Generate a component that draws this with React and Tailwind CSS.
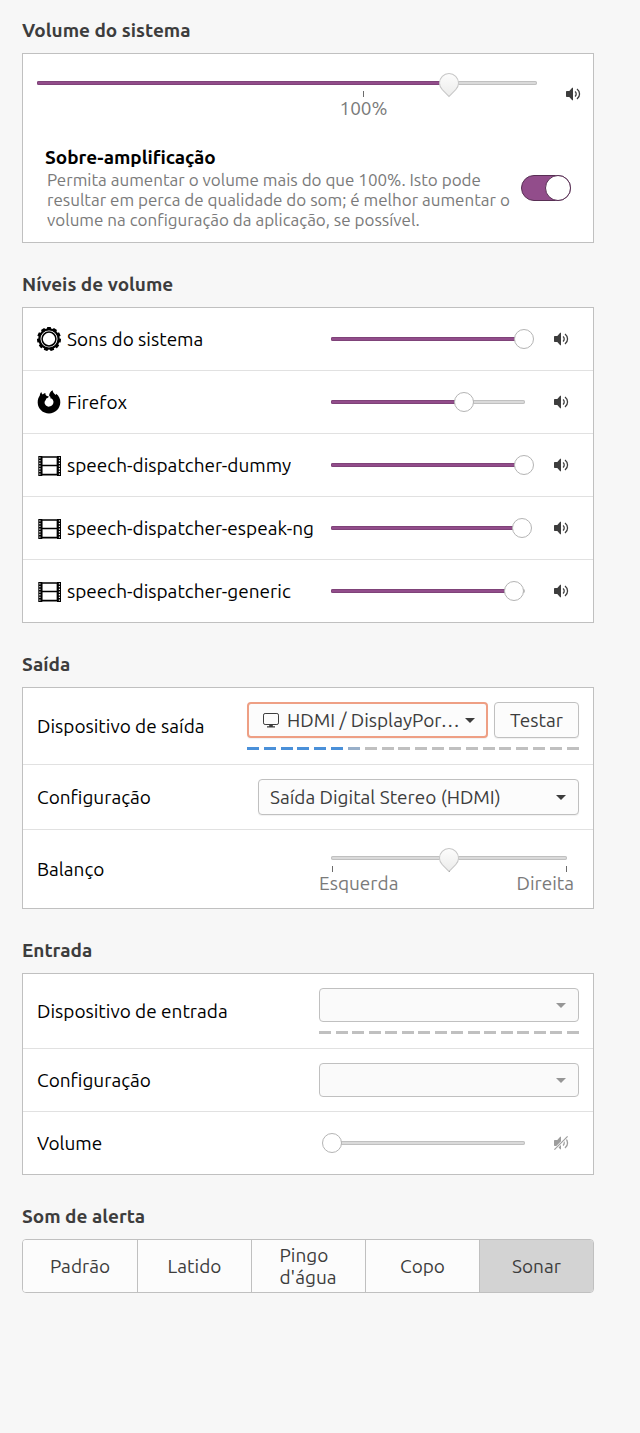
import { useState } from 'react'
import clsx from 'clsx'

const GEAR_TEETH = Array.from({ length: 11 }, (_, i) => (i * 360) / 11)

const GearIcon = () => (
  <svg viewBox="0 0 24 24" className="size-6 shrink-0" aria-hidden="true">
    {GEAR_TEETH.map((angle) => (
      <rect key={angle} x="10" y="0" width="4" height="3" rx="0.6" transform={`rotate(${angle} 12 12)`} />
    ))}
    <circle cx="12" cy="12" r="9.6" fill="none" stroke="black" strokeWidth="2.2" />
    <circle cx="12" cy="12" r="6.9" fill="none" stroke="black" strokeWidth="1.5" />
  </svg>
)

const FirefoxIcon = () => (
  <svg viewBox="0 0 24 24" className="size-6 shrink-0" aria-hidden="true">
    <path d="M4.3 2C4.5 3.1 5 3.8 5.7 4.4C6.5 3.6 7.4 3.1 8.4 2.9C8.2 4.3 8.8 5.4 10 6L11.8 6.6C11.6 7.8 10.4 8.2 9 8.8C8.8 9.6 9.2 9.8 8.4 10.4C7.4 11.2 7.3 13.2 8.2 14.6C9.2 16.2 10.8 16.8 12.4 16.6C14.8 16.4 16.6 14.4 16.5 11.8C16.3 9.6 15 8.4 13.2 8.2C13.8 7.4 13.6 6.6 12.2 6C12 3.6 13.4 1.4 15.6 0.2C15.8 2.4 17.2 3.6 18.8 5C19.2 4.6 19.2 4.2 19.2 3.8C22 6 23.5 9 23.3 12.6C23.1 18.8 18.2 23.5 12 23.5C5.8 23.5 .9 18.8 .7 12.8C.6 9.4 1.6 7.2 2.8 5.4C3 4 3.4 2.9 4.3 2Z" />
  </svg>
)

const FilmIcon = () => (
  <svg viewBox="0 0 24 24" className="size-6 shrink-0" aria-hidden="true">
    <path d="M1.3 3h4v20h-4zM20 3h4v20h-4z" />
    <path d="M4.5 4h16v17.7h-16zM4.5 12.5h16" fill="none" stroke="black" strokeWidth="1.7" />
    <path d="M2.9 4.3v18M22.4 4.3v18" stroke="white" strokeWidth="1.1" strokeDasharray="1.3 1.4" />
  </svg>
)

const SpeakerIcon = ({ muted }) => (
  <svg viewBox="0 0 16 16" className="size-4" fill="#3d3d3d" aria-hidden="true">
    <path d="M2 5h2.3L7.2 1.8H8v12.4h-.8L4.3 11H2c-.6 0-1-.4-1-1V6c0-.6.4-1 1-1z" />
    <path d="M10 5.6c1.6 1.2 1.6 3.6 0 4.8M12 3c3.4 2.6 3.4 7.4 0 10" fill="none" stroke="#3d3d3d" strokeWidth="1.3" />
    {muted && (
      <>
        <path d="M1 15.2L15 1.2" stroke="white" strokeWidth="2.6" />
        <path d="M1.4 14.6L14.6 1.4" stroke="#3d3d3d" strokeWidth="1.1" />
      </>
    )}
  </svg>
)

const MonitorIcon = () => (
  <svg viewBox="0 0 16 16" className="size-4" fill="#3d3d3d" aria-hidden="true">
    <rect x="0.5" y="1.5" width="15" height="11" rx="1.6" fill="none" stroke="#3d3d3d" />
    <path d="M6.2 12.5h3.6v1.7H12V15.4H4v-1.2h2.2z" />
  </svg>
)

const Section = ({ title, children }) => (
  <section>
    <h2 className="mb-[11px] leading-6 font-bold text-[#3d3d3d]">{title}</h2>
    {children}
  </section>
)

const Panel = ({ children }) => (
  <div className="divide-y divide-[#e1e1e1] border border-[#c0c0c0] bg-white">{children}</div>
)

const Slider = ({ label, initial, max = 100, fill = true, pointed = false, disabled = false }) => {
  const [value, setValue] = useState(initial)
  return (
    <div className="grid items-center">
      <div className="col-start-1 row-start-1 mx-[9px] h-1 overflow-hidden rounded-full bg-[#dadada] inset-ring inset-ring-[#c0c0c0]">
        {fill && value > 0 && (
          <div className="h-1 border border-[#7f4379] bg-[#924d8b]" style={{ width: `${(value / max) * 100}%` }} />
        )}
      </div>
      <input
        type="range"
        aria-label={label}
        min="0"
        max={max}
        step="any"
        value={value}
        disabled={disabled}
        onChange={(e) => setValue(Number(e.target.value))}
        className={clsx(
          'z-10 col-start-1 row-start-1 h-5 w-full min-w-0 appearance-none bg-transparent outline-none',
          '[&::-webkit-slider-thumb]:size-5 [&::-webkit-slider-thumb]:appearance-none [&::-webkit-slider-thumb]:rounded-full [&::-webkit-slider-thumb]:border [&::-webkit-slider-thumb]:border-[#b4b4b4] [&::-webkit-slider-thumb]:bg-white',
          pointed &&
            '[&::-webkit-slider-thumb]:rotate-45 [&::-webkit-slider-thumb]:rounded-br-none [&::-webkit-slider-thumb]:border-[#c6c6c6] [&::-webkit-slider-thumb]:bg-linear-to-br [&::-webkit-slider-thumb]:from-white [&::-webkit-slider-thumb]:to-[#ececeb]'
        )}
      />
    </div>
  )
}

const Tick = () => <span className="block h-1.5 w-px bg-[#6b6b6b]" />

const SpeakerButton = ({ label, muted }) => (
  <button type="button" aria-label={label} disabled={muted} className="shrink-0 disabled:opacity-50">
    <SpeakerIcon muted={muted} />
  </button>
)

const Dropdown = ({ id, value, icon, focused, disabled }) => (
  <div className="grid min-w-0 flex-1 items-center">
    <select
      id={id}
      disabled={disabled}
      className={clsx(
        'col-start-1 row-start-1 w-full appearance-none rounded pr-6 text-[#3d3d3d] outline-none',
        icon ? 'pl-[38px]' : 'pl-[11px]',
        focused ? 'border-2 border-[#ee9f84]' : 'border border-[#c0c0c0]',
        disabled ? 'h-[34px] bg-[#fafafa]' : 'h-9 bg-[#fcfcfc] shadow-[0_1px_1px_rgba(0,0,0,0.06)]'
      )}
    >
      {value && <option>{value}</option>}
    </select>
    {icon && <span className="pointer-events-none col-start-1 row-start-1 ml-4 justify-self-start">{icon}</span>}
    <svg
      viewBox="0 0 10 5"
      className="pointer-events-none col-start-1 row-start-1 mr-[13px] h-[5px] w-2.5 justify-self-end"
      fill={disabled ? '#969696' : '#3d3d3d'}
      aria-hidden="true"
    >
      <path d="M0 0h10L5 5z" />
    </svg>
  </div>
)

const LevelMeter = ({ count, level = 0 }) => (
  <div className="mt-[9px] flex justify-between">
    {Array.from({ length: count }, (_, i) => (
      <span
        key={i}
        className={clsx('h-[3px] w-3', i < level ? 'bg-[#4a90d9]' : i === level && level > 0 ? 'bg-[#98afc9]' : 'bg-[#c0c0c0]')}
      />
    ))}
  </div>
)

const FieldRow = ({ label, htmlFor, children }) => (
  <div className="flex items-center justify-between gap-4 px-3.5">
    {htmlFor ? <label htmlFor={htmlFor}>{label}</label> : <span>{label}</span>}
    {children}
  </div>
)

const apps = [
  { name: 'Sons do sistema', Icon: GearIcon, volume: 100 },
  { name: 'Firefox', Icon: FirefoxIcon, volume: 69 },
  { name: 'speech-dispatcher-dummy', Icon: FilmIcon, volume: 100 },
  { name: 'speech-dispatcher-espeak-ng', Icon: FilmIcon, volume: 99 },
  { name: 'speech-dispatcher-generic', Icon: FilmIcon, volume: 95 },
]

const alerts = ['Padrão', 'Latido', "Pingo d'água", 'Copo', 'Sonar']

const MAX_VOLUME = 153

export default function App() {
  const [amplified, setAmplified] = useState(true)
  const [alert, setAlert] = useState('Sonar')

  return (
    <main className="flex min-h-screen flex-col gap-[29px] bg-[#f7f7f7] pt-[18px] pr-[46px] pb-10 pl-[22px] font-['Ubuntu','Noto_Sans',sans-serif] text-[19px] leading-[22px] text-black">
      <Section title="Volume do sistema">
        <div className="border border-[#c0c0c0] bg-white">
          <div className="flex items-center gap-[19px] pr-3 pl-[5px]">
            <div className="min-w-0 flex-1 pt-[19px] pb-[15px]">
              <Slider label="Volume do sistema" initial={126.4} max={MAX_VOLUME} pointed />
              <div className="-mt-0.5 mx-2.5">
                <div
                  className="flex w-0 flex-col items-center text-[#7a7a7a]"
                  style={{ marginLeft: `${(100 / MAX_VOLUME) * 100}%` }}
                >
                  <Tick />
                  <span>100%</span>
                </div>
              </div>
            </div>
            <SpeakerButton label="Silenciar volume do sistema" />
          </div>
          <div className="flex items-center justify-between gap-2 px-[22px] py-3">
            <div>
              <label htmlFor="amplify" className="mb-0.5 block font-bold">
                Sobre-amplificação
              </label>
              <p className="ml-0.5 text-[17px] leading-5 text-[#7a7a7a]">
                Permita aumentar o volume mais do que 100%. Isto pode resultar em perca de qualidade do som; é melhor
                aumentar o volume na configuração da aplicação, se possível.
              </p>
            </div>
            <input
              id="amplify"
              type="checkbox"
              role="switch"
              checked={amplified}
              onChange={(e) => setAmplified(e.target.checked)}
              className="h-[26px] w-[50px] shrink-0 appearance-none rounded-full border border-[#c0c0c0] bg-[#dadada] before:-m-px before:block before:size-[26px] before:rounded-full before:border before:border-[#c0c0c0] before:bg-white checked:border-[#582f54] checked:bg-[#924d8b] checked:before:ml-[23px] checked:before:border-[#582f54]"
            />
          </div>
        </div>
      </Section>

      <Section title="Níveis de volume">
        <Panel>
          {apps.map(({ name, Icon, volume }) => (
            <div key={name} className="flex items-center pr-6 pl-3.5">
              <div className="flex min-w-0 flex-1 items-center gap-1.5 py-[19px] leading-6">
                <Icon />
                <span className="truncate">{name}</span>
              </div>
              <div className="mr-[19px] w-[212px]">
                <Slider label={name} initial={volume} />
              </div>
              <SpeakerButton label={`Silenciar ${name}`} />
            </div>
          ))}
        </Panel>
      </Section>

      <Section title="Saída">
        <Panel>
          <FieldRow label="Dispositivo de saída" htmlFor="output-device">
            <div className="w-[332px] py-3.5">
              <div className="flex gap-1.5">
                <Dropdown id="output-device" value="HDMI / DisplayPor…" icon={<MonitorIcon />} focused />
                <button
                  type="button"
                  className="h-9 w-[85px] rounded border border-[#c0c0c0] bg-[#fcfcfc] text-[#3d3d3d] shadow-[0_1px_1px_rgba(0,0,0,0.06)]"
                >
                  Testar
                </button>
              </div>
              <LevelMeter count={20} level={6} />
            </div>
          </FieldRow>
          <FieldRow label="Configuração" htmlFor="output-config">
            <div className="flex w-[321px] py-3.5">
              <Dropdown id="output-config" value="Saída Digital Stereo (HDMI)" />
            </div>
          </FieldRow>
          <FieldRow label="Balanço">
            <div className="w-[260px] pt-[18px] pb-3.5">
              <div className="mx-[3px]">
                <Slider label="Balanço" initial={50} fill={false} pointed />
                <div className="-mt-0.5 flex justify-between pr-[9px] pl-2.5">
                  <Tick />
                  <Tick />
                  <Tick />
                </div>
              </div>
              <div className="flex justify-between pr-[5px] text-[#7a7a7a]">
                <span>Esquerda</span>
                <span>Direita</span>
              </div>
            </div>
          </FieldRow>
        </Panel>
      </Section>

      <Section title="Entrada">
        <Panel>
          <FieldRow label="Dispositivo de entrada" htmlFor="input-device">
            <div className="w-[260px] py-3.5">
              <Dropdown id="input-device" disabled />
              <LevelMeter count={16} />
            </div>
          </FieldRow>
          <FieldRow label="Configuração" htmlFor="input-config">
            <div className="flex w-[260px] py-3.5">
              <Dropdown id="input-config" disabled />
            </div>
          </FieldRow>
          <div className="flex items-center py-5 pr-6 pl-3.5">
            <span className="flex-1">Volume</span>
            <div className="mr-[19px] w-[212px]">
              <Slider label="Volume de entrada" initial={0} disabled />
            </div>
            <SpeakerButton label="Entrada silenciada" muted />
          </div>
        </Panel>
      </Section>

      <Section title="Som de alerta">
        <div className="grid h-[54px] grid-cols-5 overflow-hidden rounded border border-[#c0c0c0]">
          {alerts.map((name) => (
            <button
              key={name}
              type="button"
              aria-pressed={alert === name}
              onClick={() => setAlert(name)}
              className={clsx(
                'flex items-center justify-center border-[#c0c0c0] text-[#3d3d3d] not-first:border-l',
                alert === name ? 'bg-[#d3d3d3]' : 'bg-[#fcfcfc]'
              )}
            >
              <span className={clsx('text-left', name.includes(' ') && 'w-[58px]')}>{name}</span>
            </button>
          ))}
        </div>
      </Section>
    </main>
  )
}
